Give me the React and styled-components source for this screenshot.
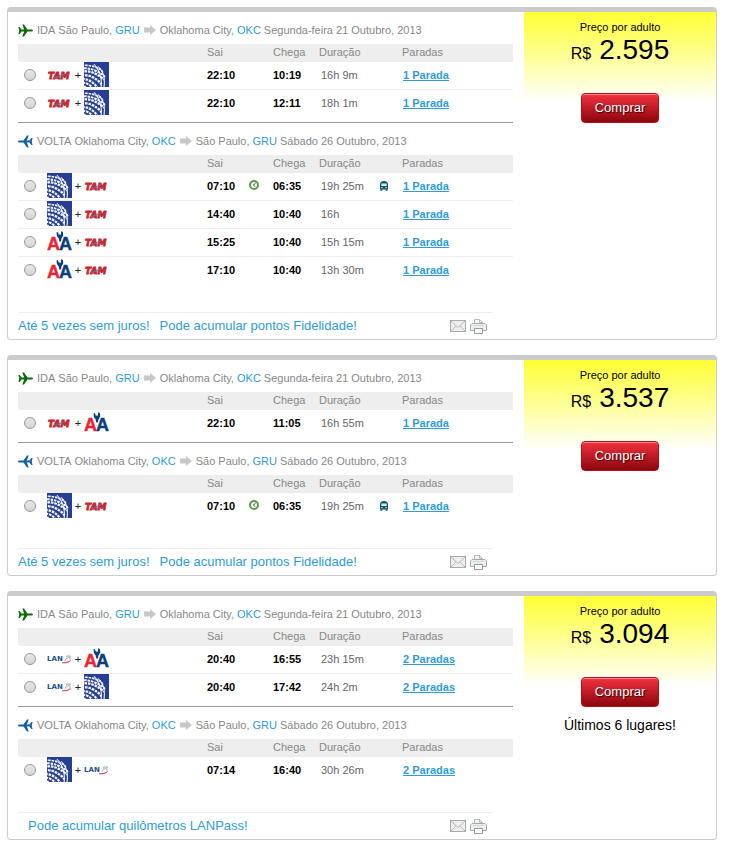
import React from "react";
import styled, { createGlobalStyle } from "styled-components";

const GlobalStyle = createGlobalStyle`
  * { box-sizing: border-box; }
  body {
    margin: 0;
    background: #fff;
    color: #000;
    font: 11px/18px "Liberation Sans", Arial, sans-serif;
  }
  svg { display: block; flex: none; }
`;

const Results = styled.main`
  display: flex;
  flex-direction: column;
  gap: 15px;
  padding: 7px 14px 4px 7px;
`;

const Card = styled.article`
  display: grid;
  grid-template-columns: minmax(0, 1fr) 192px;
  border: 1px solid #ccc;
  border-top-width: 5px;
  border-radius: 4px;
`;

const Flights = styled.div`
  padding-left: 10px;
`;

const Leg = styled.section`
  margin-right: 11px;
  padding-bottom: ${(p) => (p.$last ? "27px" : "4px")};
  border-bottom: ${(p) => (p.$last ? "none" : "1px solid #999")};
`;

const LegTitle = styled.h2`
  display: flex;
  align-items: center;
  gap: 3px;
  height: 32px;
  margin: 0;
  padding-top: 4px;
  color: #888;
  font-size: 11px;
  font-weight: normal;
  white-space: nowrap;
`;

const AirportLink = styled.a`
  color: #2e9cdb;
  text-decoration: none;
`;

const FlightTable = styled.table`
  width: 100%;
  table-layout: fixed;
  border-collapse: separate;
  border-spacing: 0;
`;

const Column = styled.col`
  width: ${(p) => (p.$width ? `${p.$width}px` : "auto")};
`;

const HeadCell = styled.th`
  height: 18px;
  padding: 0;
  background: #eee;
  color: #888;
  font-weight: normal;
  line-height: 16px;
  text-align: left;
  vertical-align: top;
  &:first-child { border-radius: 0 0 0 3px; }
`;

const FlightRow = styled.tr`
  &:not(:last-child) > td { border-bottom: 1px solid #eee; }
`;

const Cell = styled.td`
  height: 28px;
  padding: 0 0 0 ${(p) => p.$indent || 0}px;
  color: ${(p) => (p.$strong ? "#000" : "#666")};
  font-weight: ${(p) => (p.$strong ? "bold" : "normal")};
  vertical-align: top;
  line-height: 26px;
  white-space: nowrap;
`;

const IconCell = styled(Cell)`
  padding-top: 7px;
`;

const Radio = styled.input`
  appearance: none;
  display: block;
  width: 12px;
  height: 12px;
  margin: 7px 0 0 6px;
  border: 1px solid #999;
  border-radius: 50%;
  background: linear-gradient(#e8e8e8, #d4d4d4);
  &:checked { background: radial-gradient(#444 30%, #ddd 35%); }
`;

const Airlines = styled.div`
  display: flex;
  align-items: center;
  height: 25px;
`;

const Plus = styled.span`
  width: 12px;
  color: #222;
  text-align: center;
`;

const StopsLink = styled.a`
  color: #2e9cdb;
  font-weight: bold;
  text-decoration: underline;
`;

const CardFooter = styled.footer`
  display: flex;
  align-items: center;
  gap: 10px;
  height: 27px;
  margin-right: 32px;
  border-top: 1px solid #eee;
`;

const Benefit = styled.a`
  margin-left: ${(p) => (p.$inset ? "10px" : "0")};
  color: #2e9cdb;
  font-size: 13px;
  text-decoration: none;
  white-space: nowrap;
`;

const Actions = styled.div`
  display: flex;
  align-items: center;
  gap: 4px;
  margin-left: auto;
  padding-right: 5px;
`;

const IconButton = styled.button`
  display: block;
  padding: 0;
  border: 0;
  background: none;
  cursor: pointer;
`;

const PricePanel = styled.aside`
  display: flex;
  flex-direction: column;
  align-items: center;
  padding-top: 6px;
  background: linear-gradient(#ffff33, #fff) no-repeat top / 100% 90px;
`;

const PriceLabel = styled.span`
  line-height: 18px;
`;

const Price = styled.strong`
  display: flex;
  align-items: baseline;
  gap: 8px;
  margin-bottom: 25px;
  font-size: 28px;
  font-weight: normal;
  line-height: 28px;
`;

const Currency = styled.span`
  font-size: 16px;
`;

const BuyButton = styled.button`
  height: 30px;
  padding: 0 13px;
  border: 1px solid #b80d18;
  border-radius: 4px;
  background: linear-gradient(#f2323f, #8c050d);
  box-shadow: inset 0 1px 0 #f58a90;
  color: #fff;
  font: 13px/26px "Liberation Sans", Arial, sans-serif;
  text-shadow: 1px 1px 1px #300;
  cursor: pointer;
`;

const SeatsLeft = styled.p`
  margin: 9px 0 0;
  font-size: 14px;
  line-height: 18px;
`;

const Plane = ({ back }) => (
  <svg width="16" height="14" viewBox="0 0 16 14" aria-hidden="true">
    <path
      transform={back ? "translate(15 0) scale(-1 1)" : undefined}
      fill={back ? "#0e5ea8" : "#0b6b0b"}
      d="M15 7.5c0 .7-.9 1-2 1H9.5L6 13.5H4.3l1.9-5H3.4L1.7 11H.4l.9-3.5L.4 4h1.3l1.7 2.5h2.8l-1.9-5H6l3.5 5H13c1.1 0 2 .3 2 1Z"
    />
  </svg>
);

const Arrow = () => (
  <svg width="14" height="10" viewBox="-1 0 14 10" aria-hidden="true">
    <path d="M0 2.5h6V0l6 5-6 5V7.5H0Z" fill="#c8c8c8" />
  </svg>
);

const United = () => {
  const id = React.useId();
  return (
    <svg width="25" height="25" viewBox="0 0 25 25" role="img" aria-label="United">
      <clipPath id={id}><circle cx="4" cy="19" r="18" /></clipPath>
      <rect width="25" height="25" fill="#263f92" />
      <g clipPath={`url(#${id})`} fill="none" stroke="#f4f6fb" strokeDasharray="2.6 0.9">
        <g transform="rotate(-8 4 19)">
          <path d="M-14 4.5Q7-2 22 13" strokeWidth="1.6" />
          <path d="M-12 7Q7 1 22.500 18" strokeWidth="2" />
          <path d="M-12 10.500Q7 4 20 20" strokeWidth="2.300" />
          <path d="M-12 14Q6 8 17 24" strokeWidth="2.300" />
          <path d="M-12 17.500Q5 12 13 28" strokeWidth="2.200" />
          <path d="M-12 21Q4 16 9 30" strokeWidth="2.100" />
          <path d="M-12 24.500Q3 20 5 32" strokeWidth="2" />
        </g>
        <g strokeDasharray="none" strokeWidth="1.1">
          <path d="M14 4q8 8 6 21" />
          <path d="M10 2q9 10 7 24" />
        </g>
      </g>
    </svg>
  );
};

const Tam = () => (
  <svg width="25" height="25" viewBox="0 0 25 25" role="img" aria-label="TAM">
    <text x="1" y="17" fontFamily="DejaVu Sans" fontSize="9" fontWeight="bold" fontStyle="italic" fill="#c9252c" stroke="#c9252c" strokeWidth="0.8">TAM</text>
    <path d="M7 15.5c4-.3 5.5-3 10-3.2-3 .8-5 3-10 3.2Z" fill="#2f7fc0" stroke="#4a86c4" strokeWidth="0.5" />
  </svg>
);

const American = () => (
  <svg width="25" height="25" viewBox="0 0 25 25" role="img" aria-label="American Airlines">
    <g fontFamily="Liberation Sans" fontSize="18" fontWeight="bold" strokeWidth="0.4">
      <text x="0" y="21" fill="#f01f35" stroke="#f01f35">A</text>
      <text x="12" y="21" fill="#0b3f7c" stroke="#0b3f7c">A</text>
    </g>
    <path d="m9.5 3.5 1.3-.5 1.3 3.300.7-1.300.8 1.300L14.400 2l1.600 1.200.2 3.300-1.700 3-.6 3h-1.600l-.6-3L9.900 7Z" fill="#0b3f7c" />
  </svg>
);

const Lan = () => (
  <svg width="25" height="25" viewBox="0 0 25 25" role="img" aria-label="LAN">
    <text x="0" y="15" fontFamily="DejaVu Sans" fontSize="7" fontWeight="bold" fill="#25508c">LAN</text>
    <path d="M15 16.8c4 .5 7-.3 8.500-2.300-1.600 1.200-4.500 2.300-8.500 2.300Z" fill="#e0404c" stroke="#e0404c" strokeWidth="0.6" />
    <path d="m18 14.500 2-3-.5-1.500h4l-1 2 1 2.300M20.500 12.500l2-2" fill="none" stroke="#a9adb5" strokeWidth="1" />
  </svg>
);

const LOGOS = { united: United, tam: Tam, american: American, lan: Lan };

const Clock = () => (
  <svg width="10" height="10" viewBox="0 0 10 10" role="img" aria-label="Dia seguinte">
    <circle cx="5" cy="5" r="4" fill="#f6fbf4" stroke="#5d9a48" strokeWidth="2" />
    <path d="M6.5 3.2 4.4 5l1.400 1.400" fill="none" stroke="#333" strokeWidth="1" />
  </svg>
);

const Bus = () => (
  <svg width="10" height="11" viewBox="0 0 10 11" role="img" aria-label="Troca de aeroporto">
    <path d="M1 9.500V4.500Q1 1 5 1t4 3.500v5H8.500v1.200H6.700V9.500H3.300v1.200H1.500V9.500Z" fill="#125874" />
    <path d="M2.500 3.500h5l.4 2.500H2.100Z" fill="#d4e9f1" />
    <path d="M2.200 7.300h1.400v1H2.200zM6.400 7.300h1.400v1H6.400z" fill="#fff" />
  </svg>
);

const Mail = () => (
  <svg width="16" height="12" viewBox="0 0 16 12" aria-hidden="true">
    <rect x="0.5" y="0.5" width="15" height="11" fill="#eee" stroke="#aaa" />
    <path d="m1 1 7 6.5L15 1M1 11l5-5M15 11l-5-5" fill="none" stroke="#bbb" />
  </svg>
);

const Printer = () => (
  <svg width="17" height="17" viewBox="0 0 17 17" aria-hidden="true">
    <path d="M4.500 6.500v-5h5l3 3v2" fill="#f4f4f4" stroke="#bbb" />
    <path d="M9.500 1.500v3h3" fill="none" stroke="#bbb" />
    <path d="M2 5.500h13l1.500 1.500v5.500H.5V7Z" fill="#eee" stroke="#aaa" />
    <path d="M3 7.500h11" stroke="#c7dbe6" />
    <path d="M4.500 10.500h8v5h-8z" fill="#fff" stroke="#999" />
  </svg>
);

const OUTBOUND = {
  label: "IDA",
  from: ["São Paulo", "GRU"],
  to: ["Oklahoma City", "OKC"],
  date: "Segunda-feira 21 Outubro, 2013",
};

const RETURN = {
  label: "VOLTA",
  from: ["Oklahoma City", "OKC"],
  to: ["São Paulo", "GRU"],
  date: "Sábado 26 Outubro, 2013",
  back: true,
};

const flight = (airlines, departs, arrives, duration, stops, flagged) => ({
  airlines, departs, arrives, duration, stops, flagged,
});

const OFFERS = [
  {
    price: "2.595",
    benefits: ["Até 5 vezes sem juros!", "Pode acumular pontos Fidelidade!"],
    outbound: [
      flight(["tam", "united"], "22:10", "10:19", "16h 9m", "1 Parada"),
      flight(["tam", "united"], "22:10", "12:11", "18h 1m", "1 Parada"),
    ],
    inbound: [
      flight(["united", "tam"], "07:10", "06:35", "19h 25m", "1 Parada", true),
      flight(["united", "tam"], "14:40", "10:40", "16h", "1 Parada"),
      flight(["american", "tam"], "15:25", "10:40", "15h 15m", "1 Parada"),
      flight(["american", "tam"], "17:10", "10:40", "13h 30m", "1 Parada"),
    ],
  },
  {
    price: "3.537",
    benefits: ["Até 5 vezes sem juros!", "Pode acumular pontos Fidelidade!"],
    outbound: [flight(["tam", "american"], "22:10", "11:05", "16h 55m", "1 Parada")],
    inbound: [flight(["united", "tam"], "07:10", "06:35", "19h 25m", "1 Parada", true)],
  },
  {
    price: "3.094",
    seats: "Últimos 6 lugares!",
    benefits: ["Pode acumular quilômetros LANPass!"],
    outbound: [
      flight(["lan", "american"], "20:40", "16:55", "23h 15m", "2 Paradas"),
      flight(["lan", "united"], "20:40", "17:42", "24h 2m", "2 Paradas"),
    ],
    inbound: [flight(["united", "lan"], "07:14", "16:40", "30h 26m", "2 Paradas")],
  },
];

function FlightLeg({ route, flights, name, last }) {
  return (
    <Leg $last={last}>
      <LegTitle>
        <Plane back={route.back} />
        <span>{route.label}</span>
        <span>{route.from[0]},</span>
        <AirportLink href="#">{route.from[1]}</AirportLink>
        <Arrow />
        <span>{route.to[0]},</span>
        <AirportLink href="#">{route.to[1]}</AirportLink>
        <span>{route.date}</span>
      </LegTitle>
      <FlightTable>
        <colgroup>
          <Column $width={29} />
          <Column $width={160} />
          <Column $width={42} />
          <Column $width={24} />
          <Column $width={46} />
          <Column $width={60} />
          <Column $width={23} />
          <Column />
        </colgroup>
        <thead>
          <tr>
            <HeadCell colSpan={2} />
            <HeadCell colSpan={2}>Sai</HeadCell>
            <HeadCell>Chega</HeadCell>
            <HeadCell colSpan={2}>Duração</HeadCell>
            <HeadCell>Paradas</HeadCell>
          </tr>
        </thead>
        <tbody>
          {flights.map((f, i) => {
            const First = LOGOS[f.airlines[0]];
            const Second = LOGOS[f.airlines[1]];
            return (
              <FlightRow key={i}>
                <Cell>
                  <Radio type="radio" name={name} aria-label={`${route.label} ${f.departs} – ${f.arrives}`} />
                </Cell>
                <Cell>
                  <Airlines>
                    <First />
                    <Plus>+</Plus>
                    <Second />
                  </Airlines>
                </Cell>
                <Cell $strong>{f.departs}</Cell>
                <IconCell>{f.flagged && <Clock />}</IconCell>
                <Cell $strong>{f.arrives}</Cell>
                <Cell $indent={2}>{f.duration}</Cell>
                <IconCell>{f.flagged && <Bus />}</IconCell>
                <Cell $indent={1}><StopsLink href="#">{f.stops}</StopsLink></Cell>
              </FlightRow>
            );
          })}
        </tbody>
      </FlightTable>
    </Leg>
  );
}

export default function App() {
  return (
    <>
      <GlobalStyle />
      <Results>
        {OFFERS.map((offer, i) => (
          <Card key={offer.price}>
            <Flights>
              <FlightLeg route={OUTBOUND} flights={offer.outbound} name={`out-${i}`} />
              <FlightLeg route={RETURN} flights={offer.inbound} name={`in-${i}`} last />
              <CardFooter>
                {offer.benefits.map((b) => (
                  <Benefit key={b} href="#" $inset={offer.benefits.length === 1}>{b}</Benefit>
                ))}
                <Actions>
                  <IconButton type="button" aria-label="Enviar por e-mail"><Mail /></IconButton>
                  <IconButton type="button" aria-label="Imprimir"><Printer /></IconButton>
                </Actions>
              </CardFooter>
            </Flights>
            <PricePanel>
              <PriceLabel>Preço por adulto</PriceLabel>
              <Price><Currency>R$</Currency>{offer.price}</Price>
              <BuyButton type="button">Comprar</BuyButton>
              {offer.seats && <SeatsLeft>{offer.seats}</SeatsLeft>}
            </PricePanel>
          </Card>
        ))}
      </Results>
    </>
  );
}
